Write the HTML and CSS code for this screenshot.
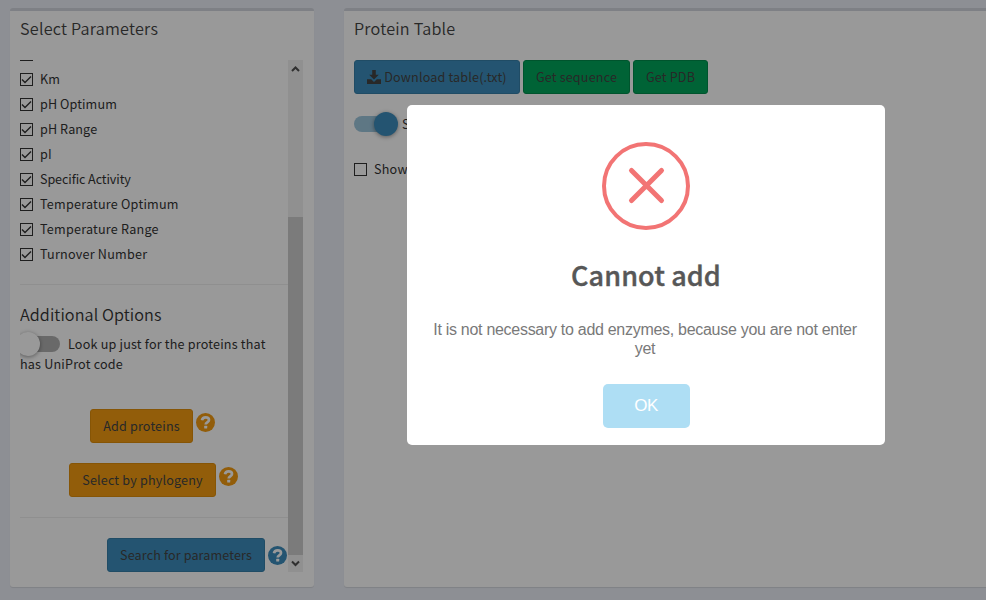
FILE: index.html
```html
<!DOCTYPE html>
<html lang="en">
<head>
<meta charset="utf-8">
<title>Protein Table</title>
<link rel="stylesheet" href="styles.css">
</head>
<body>
<svg class="defs" width="0" height="0">
  <symbol id="help" viewBox="0 0 19 19"><circle cx="9.5" cy="9.5" r="9.5" fill="currentColor"/><path d="M6 7.2C6.3 5.3 7.6 4.3 9.6 4.3c2 0 3.4 1.1 3.4 2.8 0 2.3-3.3 2.4-3.3 4.4" fill="none" stroke="#fff" stroke-width="2.7"/><rect x="8.2" y="12.7" width="3" height="2.9" rx=".5" fill="#fff"/></symbol>
</svg>
<div class="page">
  <section class="box box-left">
    <h3 class="title">Select Parameters</h3>
    <div class="scroller">
      <div class="content">
        <div class="check first"><i class="tick"></i></div>
        <label class="check"><svg class="cb" viewBox="0 0 13 13"><rect x=".5" y=".5" width="12" height="12"/><path d="M2 6.4 5 9.4 11 3.4"/></svg><span>Km</span></label>
        <label class="check"><svg class="cb" viewBox="0 0 13 13"><rect x=".5" y=".5" width="12" height="12"/><path d="M2 6.4 5 9.4 11 3.4"/></svg><span class="mid">pH Optimum</span></label>
        <label class="check"><svg class="cb" viewBox="0 0 13 13"><rect x=".5" y=".5" width="12" height="12"/><path d="M2 6.4 5 9.4 11 3.4"/></svg><span class="mid">pH Range</span></label>
        <label class="check"><svg class="cb" viewBox="0 0 13 13"><rect x=".5" y=".5" width="12" height="12"/><path d="M2 6.4 5 9.4 11 3.4"/></svg><span>pI</span></label>
        <label class="check"><svg class="cb" viewBox="0 0 13 13"><rect x=".5" y=".5" width="12" height="12"/><path d="M2 6.4 5 9.4 11 3.4"/></svg><span class="tight">Specific Activity</span></label>
        <label class="check"><svg class="cb" viewBox="0 0 13 13"><rect x=".5" y=".5" width="12" height="12"/><path d="M2 6.4 5 9.4 11 3.4"/></svg><span>Temperature Optimum</span></label>
        <label class="check"><svg class="cb" viewBox="0 0 13 13"><rect x=".5" y=".5" width="12" height="12"/><path d="M2 6.4 5 9.4 11 3.4"/></svg><span>Temperature Range</span></label>
        <label class="check"><svg class="cb" viewBox="0 0 13 13"><rect x=".5" y=".5" width="12" height="12"/><path d="M2 6.4 5 9.4 11 3.4"/></svg><span>Turnover Number</span></label>
        <hr class="rule">
        <h4 class="title sub">Additional Options</h4>
        <div class="option"><span class="switch off"><i class="knob"></i></span>Look up just for the proteins that<br>has UniProt code</div>
        <div class="action add"><button class="btn warn">Add proteins</button><svg class="help orange"><use href="#help"/></svg></div>
        <div class="action phylo"><button class="btn warn">Select by phylogeny</button><svg class="help orange"><use href="#help"/></svg></div>
        <hr class="rule">
        <div class="action search"><button class="btn primary">Search for parameters</button><svg class="help blue"><use href="#help"/></svg></div>
      </div>
      <div class="bar">
        <svg class="arrow" viewBox="0 0 15 17"><path d="M4 11 7.500 7.500 11 11"/></svg>
        <div class="thumb"></div>
        <svg class="arrow" viewBox="0 0 15 17"><path d="M4 6.500 7.500 10 11 6.500"/></svg>
      </div>
    </div>
  </section>
  <section class="box box-right">
    <h3 class="title">Protein Table</h3>
    <div class="buttons">
      <button class="btn primary download"><svg class="dl" viewBox="0 0 14 14"><path d="M5.200 0h3.600v4.700h3L7 9.500 2.200 4.700h3z"/><path d="M0 9.300h4.200L7 12l2.800-2.700H14V14H0z"/></svg>Download table(.txt)</button>
      <button class="btn success seq">Get sequence</button>
      <button class="btn success pdb">Get PDB</button>
    </div>
    <div class="toggle"><span class="switch on"><i class="knob"></i></span><span>Show</span></div>
    <label class="check show"><svg class="cb" viewBox="0 0 13 13"><rect x=".5" y=".5" width="12" height="12"/></svg><span>Show</span></label>
  </section>
</div>
<div class="overlay">
  <div class="modal">
    <svg class="error" viewBox="0 0 88 88"><circle cx="44" cy="44" r="42"/><path d="M29.500 28.500 59.500 58.500M59.500 28.500 29.500 58.500"/></svg>
    <h2 class="heading">Cannot add</h2>
    <p class="message">It is not necessary to add enzymes, because you are not enter yet</p>
    <button class="ok">OK</button>
  </div>
</div>
</body>
</html>
```
FILE: styles.css
```css
* { box-sizing: border-box; }
body { margin: 0; width: 986px; height: 600px; overflow: hidden; background: #eceff7; color: #333; font: 12.6px/20px "Noto Sans CJK SC", sans-serif; letter-spacing: .22px; }
.defs { position: absolute; }
.page { display: flex; gap: 30px; padding: 8px 0 0 10px; height: 600px; }
.box { height: 579px; background: #fff; border-top: 3px solid #d2d6de; border-radius: 3px; box-shadow: 0 1px 1px rgba(0,0,0,.1); padding: 7px 10px; flex: none; }
.box-left { width: 304px; }
.box-right { width: 660px; }
.title { margin: 0; font-size: 16.2px; font-weight: 350; line-height: 20px; letter-spacing: .22px; color: #444; white-space: nowrap; }
.scroller { margin-top: 22px; height: 512px; width: 283px; display: flex; overflow: hidden; }
.content { width: 268px; flex: none; overflow: hidden; }
.check { display: flex; align-items: center; height: 25px; gap: 7px; white-space: nowrap; }
.check span { padding-bottom: 2px; }
.check .mid { letter-spacing: .1px; }
.check .tight { letter-spacing: -.1px; }
.check.first { height: 7px; align-items: flex-start; }
.tick { width: 13px; height: 1px; background: #333; }
.cb { width: 13px; height: 13px; fill: none; stroke: #333; stroke-width: 1; flex: none; }
.cb path { stroke-width: 1.4; }
.rule { margin: 17px 0 0; border: 0; border-top: 1px solid #eee; }
.sub { margin-top: 19px; color: #333; letter-spacing: .08px; }
.option { margin-top: 10px; height: 40px; white-space: nowrap; letter-spacing: .19px; }
.switch { display: inline-flex; align-items: center; width: 40px; height: 16px; border-radius: 8px; }
.knob { width: 24px; height: 24px; border-radius: 50%; flex: none; box-shadow: 0 1px 4px rgba(0,0,0,.4); }
.off { background: #b0b0b0; margin: -4px 8px -4px 0; vertical-align: -7px; }
.off .knob { background: #fff; margin-left: -4px; }
.on { background: #9dc6dd; }
.on .knob { background: #3c8dbc; margin-left: 20px; }
.btn { height: 34px; border: 1px solid; border-radius: 3px; padding: 0; font: inherit; letter-spacing: .17px; color: #444; text-align: center; white-space: nowrap; flex: none; }
.warn { background: #f39c12; border-color: #e08e0b; }
.primary { background: #3c8dbc; border-color: #367fa9; }
.success { background: #00a65a; border-color: #008d4c; }
.action { display: flex; gap: 3px; height: 34px; }
.help { width: 19px; height: 19px; margin-top: 4px; flex: none; }
.orange { color: #f39c12; }
.blue { color: #3c8dbc; }
.add { margin: 35px 0 0 70px; }
.add .btn { width: 103px; }
.phylo { margin: 20px 0 20px 49px; }
.phylo .btn { width: 147px; }
.phylo + .rule { margin-top: 20px; }
.search { margin: 20px 0 0 87px; }
.search .btn { width: 158px; letter-spacing: .12px; }
.search .help { margin-top: 8px; }
.bar { width: 15px; background: #f0f0f0; flex: none; display: flex; flex-direction: column; }
.arrow { width: 15px; height: 17px; fill: none; stroke: #505050; stroke-width: 2; }
.thumb { height: 338px; margin-top: 140px; background: #cdcdcd; }
.buttons { display: flex; gap: 3px; margin-top: 22px; }
.download { width: 166px; }
.seq { width: 107px; }
.pdb { width: 75px; }
.dl { width: 14px; height: 14px; fill: #444; margin-right: 3px; vertical-align: -2px; }
.toggle { display: flex; align-items: center; gap: 8px; height: 24px; margin-top: 18px; }
.show { margin-top: 21px; }
.overlay { position: absolute; inset: 0; background: rgba(0,0,0,.4); }
.modal { position: absolute; left: 407px; top: 105px; width: 478px; height: 340px; background: #fff; border-radius: 5px; display: flex; flex-direction: column; align-items: center; padding-top: 37px; text-align: center; }
.error { width: 88px; height: 88px; fill: none; stroke: #f27474; stroke-width: 4; flex: none; }
.error path { stroke-width: 5; stroke-linecap: round; }
.heading { margin: 25px 0 0; font-size: 27px; line-height: 40px; font-weight: 500; letter-spacing: .1px; color: #575757; -webkit-text-stroke: .4px #575757; }
.message { margin: 25px 0 0; width: 440px; font: 16px/19px "Liberation Sans", sans-serif; letter-spacing: -.29px; padding-right: 2px; color: #797979; }
.ok { margin-top: 26px; width: 87px; height: 44px; border: 0; border-radius: 5px; background: #aedef4; color: #fff; font: 17px "Liberation Sans", sans-serif; letter-spacing: -.5px; }
```
